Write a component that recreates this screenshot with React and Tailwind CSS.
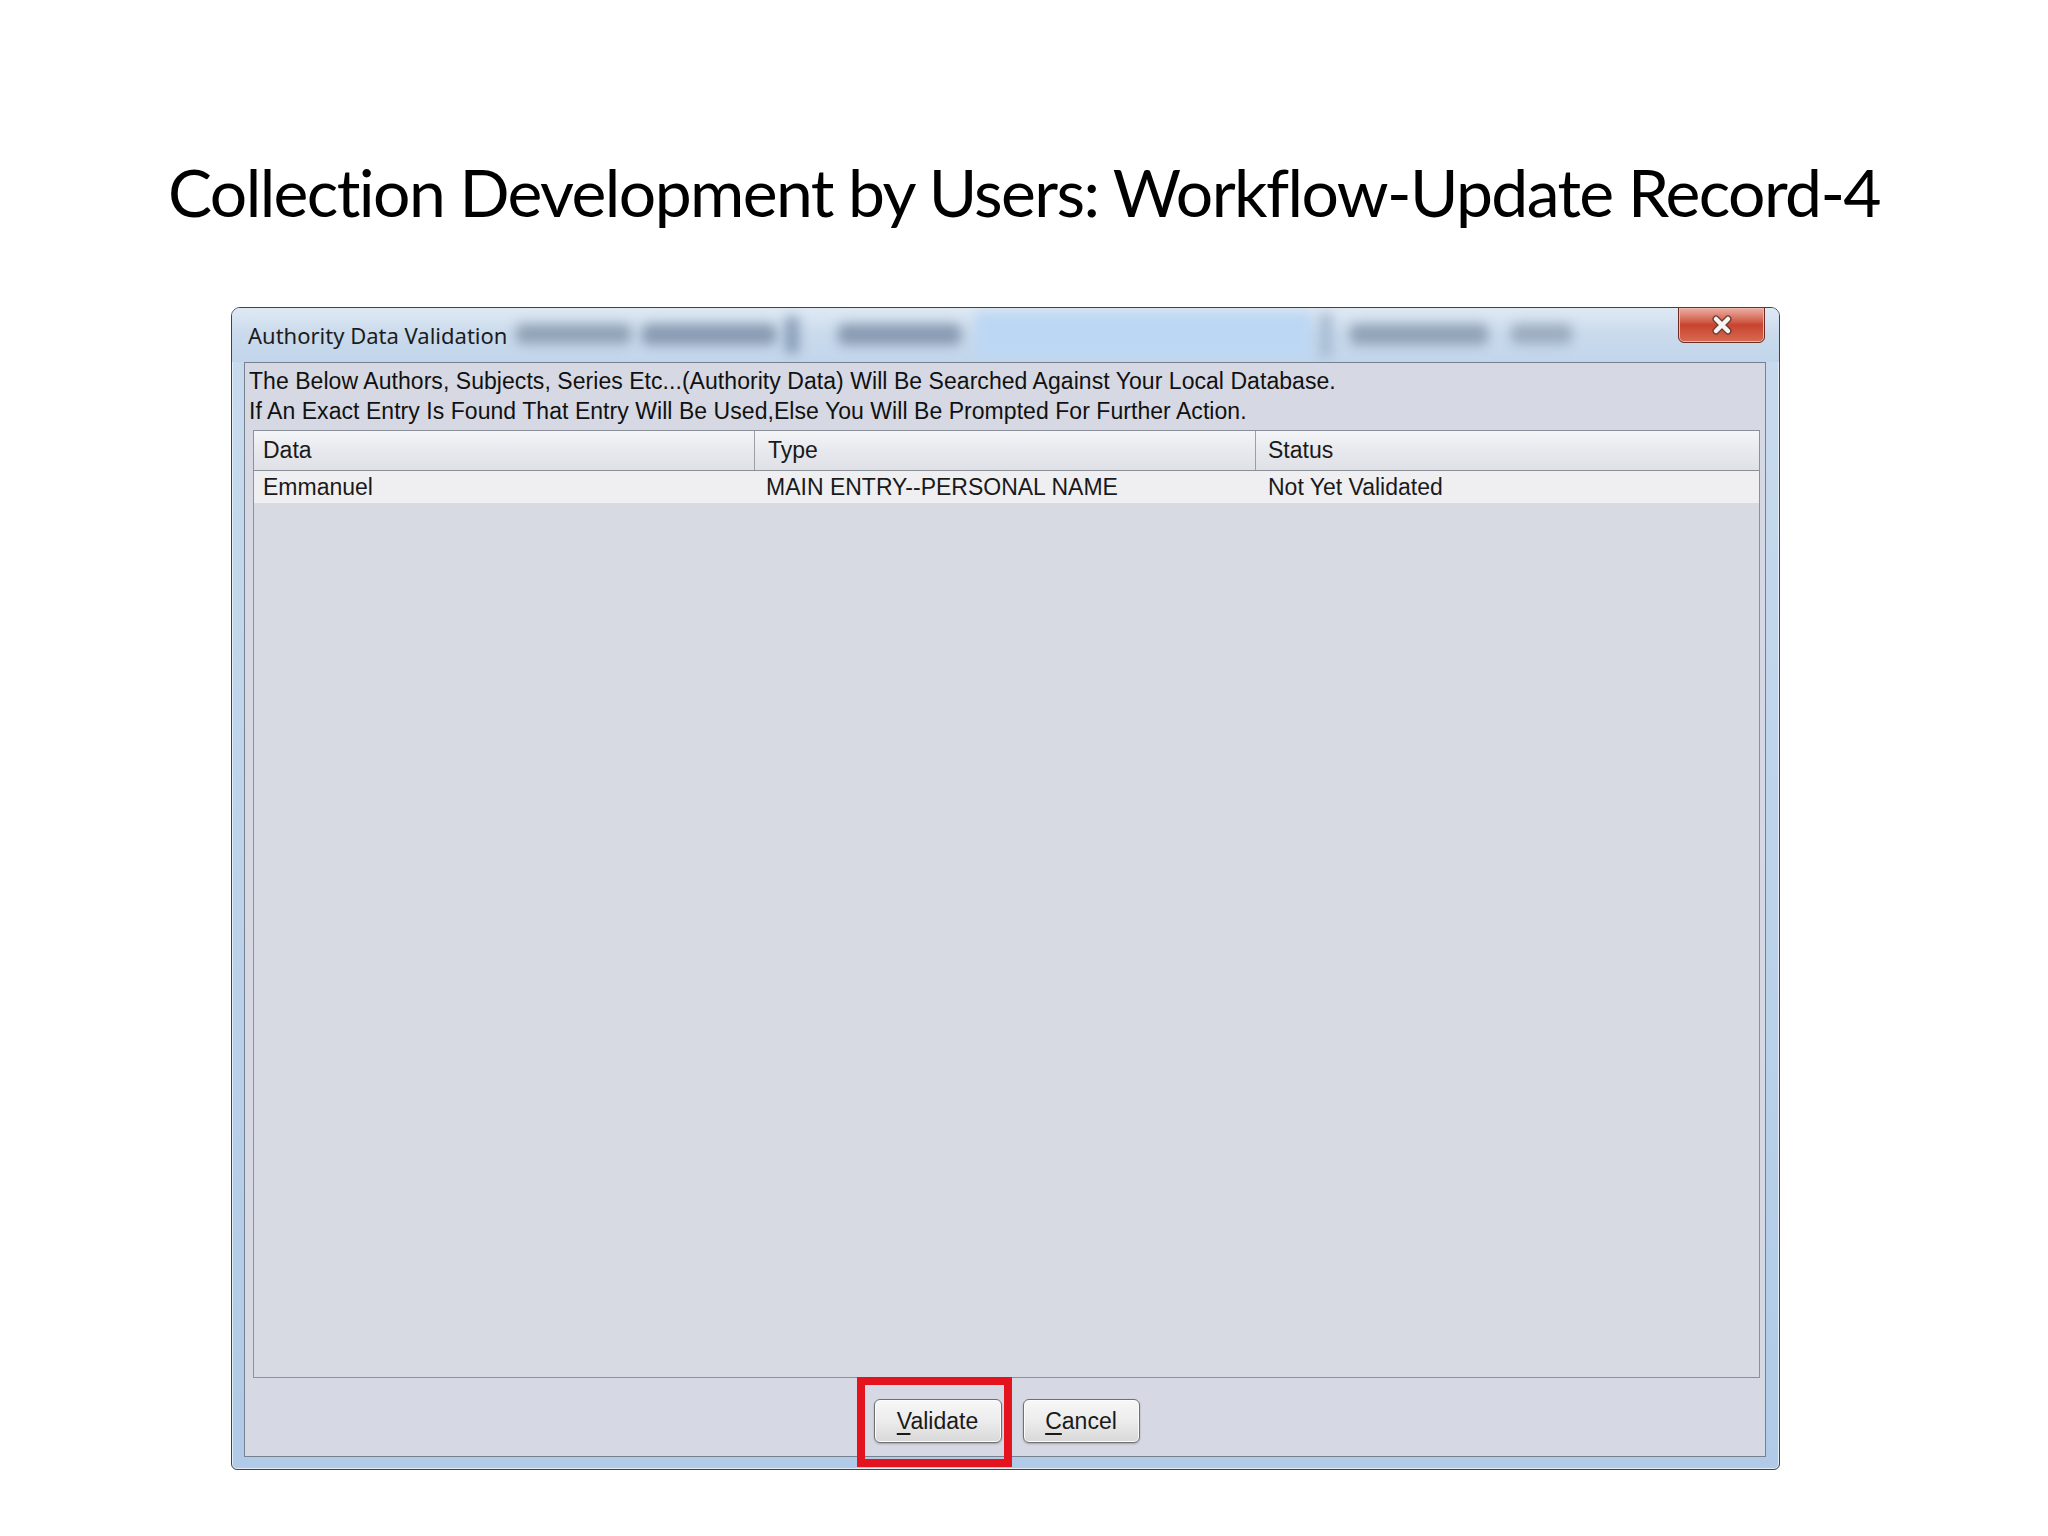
import React from "react";

function Btn({ mn, rest, w }) {
  return (
    <div
      className={`${w} h-[44px] rounded-[6px] border border-[#707070] bg-gradient-to-b from-[#f7f7f7] via-[#ececec] to-[#d8d8d8] flex items-center justify-center shadow-[inset_0_0_0_1px_#fcfcfc,0_1px_2px_rgba(0,0,0,0.25)]`}
    >
      <span className="text-[23px] text-[#1a1a1a] leading-none">
        <span className="underline underline-offset-[4px]">{mn}</span>
        {rest}
      </span>
    </div>
  );
}

export default function App() {
  return (
    <div className="w-[2048px] h-[1536px] bg-white overflow-hidden font-['Liberation_Sans',Arial,sans-serif]">
      <h1 className="pt-[150px] text-center whitespace-nowrap font-['Lato',sans-serif] text-[66px] tracking-[-1.6px] leading-[84px] text-black font-normal">
        Collection Development by Users: Workflow-Update Record-4
      </h1>

      <div className="mt-[73px] ml-[231px] w-[1549px] h-[1163px] flex flex-col rounded-t-[9px] rounded-b-[6px] border border-[#3f444c] bg-gradient-to-b from-[#c9dbee] via-[#bcd3ea] to-[#b0cae7] shadow-[inset_0_0_0_1px_#e4eef8]">
        {/* Title bar */}
        <div className="relative h-[54px] shrink-0 overflow-hidden rounded-t-[8px] bg-gradient-to-b from-[#dfe9f4] via-[#c9daec] to-[#c2d6eb]">
          <div className="absolute left-[743px] top-[4px] w-[337px] h-[46px] bg-[#bcd7f3] blur-[6px]" />
          <div className="absolute left-[284px] top-[16px] w-[115px] h-[20px] rounded-[6px] bg-[#7f90a6] opacity-75 blur-[6px]" />
          <div className="absolute left-[410px] top-[16px] w-[134px] h-[21px] rounded-[6px] bg-[#74869e] opacity-75 blur-[6px]" />
          <div className="absolute left-[553px] top-[8px] w-[14px] h-[38px] rounded-[6px] bg-[#7389a6] opacity-75 blur-[6px]" />
          <div className="absolute left-[606px] top-[16px] w-[123px] h-[21px] rounded-[6px] bg-[#74869e] opacity-75 blur-[6px]" />
          <div className="absolute left-[1088px] top-[4px] w-[12px] h-[46px] rounded-[6px] bg-[#9aaec6] opacity-75 blur-[6px]" />
          <div className="absolute left-[1118px] top-[16px] w-[138px] h-[21px] rounded-[6px] bg-[#7f90a6] opacity-75 blur-[6px]" />
          <div className="absolute left-[1279px] top-[16px] w-[61px] h-[20px] rounded-[6px] bg-[#8e9db1] opacity-75 blur-[6px]" />
          <div className="absolute left-[16px] top-0 h-[54px] flex items-center font-['Noto_Sans',sans-serif] text-[22px] text-[#1c1c1c]">
            Authority Data Validation
          </div>
          {/* close button */}
          <div className="absolute right-[14px] top-[-1px] w-[87px] h-[36px] rounded-b-[6px] border border-[#6e2b22] bg-gradient-to-b from-[#eab0a6] via-[#c8432e] to-[#d86a52] shadow-[inset_0_0_0_1px_#f0b7ab] flex items-center justify-center">
            <svg width="26" height="20" viewBox="0 0 26 20">
              <path d="M7 4 L19 16 M19 4 L7 16" stroke="#6a3a34" strokeWidth="7" strokeLinecap="round" />
              <path d="M7 4 L19 16 M19 4 L7 16" stroke="#f7f4f2" strokeWidth="4.5" strokeLinecap="round" />
            </svg>
          </div>
        </div>

        {/* Frame body */}
        <div className="flex-1 flex flex-col pl-[12px] pr-[13px] pb-[12px]">
          <div className="flex-1 flex flex-col border border-[#76808e] bg-[#d6d9e3]">
            <div className="pt-[3px] pl-[4px] text-[23px] tracking-[0.05px] leading-[30px] text-[#111] whitespace-nowrap">
              <div>The Below Authors, Subjects, Series Etc...(Authority Data) Will Be Searched Against Your Local Database.</div>
              <div>If An Exact Entry Is Found That Entry Will Be Used,Else You Will Be Prompted For Further Action.</div>
            </div>

            {/* Table */}
            <div className="mt-[4px] ml-[8px] mr-[5px] h-[948px] shrink-0 flex flex-col border border-[#8c9099] bg-[#d8dae3]">
              <div className="h-[40px] flex border-b border-[#8a8e96] bg-gradient-to-b from-[#f4f5f7] via-[#e8e9ee] to-[#dfe1e7] text-[23px] text-[#1a1a1a]">
                <div className="w-[501px] flex items-center pl-[9px] border-r border-[#9a9ea6]">Data</div>
                <div className="w-[501px] flex items-center pl-[13px] border-r border-[#9a9ea6]">Type</div>
                <div className="flex-1 flex items-center pl-[12px]">Status</div>
              </div>
              <div className="h-[32px] flex bg-[#efeff2] text-[23px] text-[#1a1a1a]">
                <div className="w-[501px] flex items-center pl-[9px]">Emmanuel</div>
                <div className="w-[501px] flex items-center pl-[11px]">MAIN ENTRY--PERSONAL NAME</div>
                <div className="flex-1 flex items-center pl-[12px]">Not Yet Validated</div>
              </div>
              <div className="flex-1" />
            </div>

            {/* Buttons */}
            <div className="flex-1 flex justify-center pt-[21px] pl-[3px]">
              <div className="relative flex gap-[21px]">
                <div className="absolute left-[-17px] top-[-22px] w-[155px] h-[90px] border-[8px] border-[#e3141d]" />
                <Btn mn="V" rest="alidate" w="w-[128px]" />
                <Btn mn="C" rest="ancel" w="w-[117px]" />
              </div>
            </div>
          </div>
        </div>
      </div>
    </div>
  );
}
